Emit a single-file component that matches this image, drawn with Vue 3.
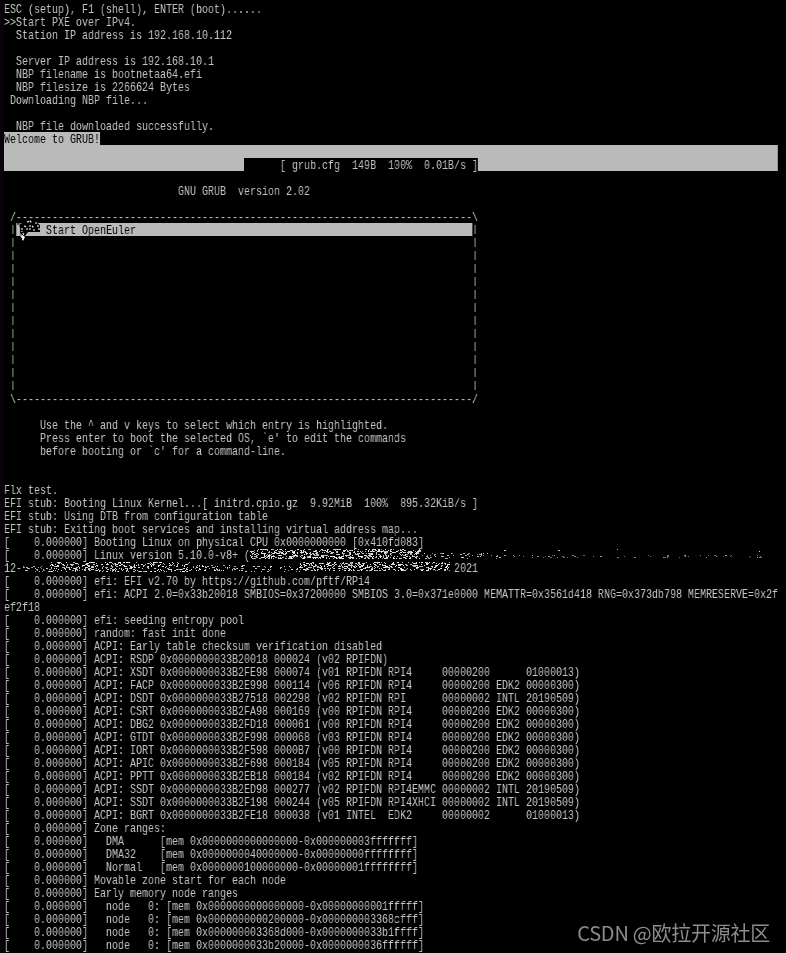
<script setup>
const p = '[    0.000000] '
const acpi = (sig, addr, rest) => `${p}ACPI: ${sig} 0x0000000033B${addr} ${rest}`
const blank = ' '

const seg = (...parts) => parts.map(([t, c]) => ({ t, c: c || '' }))
const plain = (t) => seg([t])
const side = seg([' '], ['|', 'edge'], [' '.repeat(76)], ['|', 'edge'])

const lines = [
  'ESC (setup), F1 (shell), ENTER (boot)......',
  '>>Start PXE over IPv4.',
  '  Station IP address is 192.168.10.112',
  blank,
  '  Server IP address is 192.168.10.1',
  '  NBP filename is bootnetaa64.efi',
  '  NBP filesize is 2266624 Bytes',
  ' Downloading NBP file...',
  blank,
  '  NBP file downloaded successfully.',
].map(plain)

const rows = [
  ...lines,
  seg(['Welcome to GRUB!', 'inv']),
  seg([' '.repeat(129), 'inv']),
  seg([' '.repeat(40), 'inv'], ['      [ grub.cfg  149B  100%  0.01B/s ]'], [' '.repeat(50), 'inv']),
  plain(blank),
  plain(' '.repeat(29) + 'GNU GRUB  version 2.02'),
  plain(blank),
  plain(' /' + '-'.repeat(76) + '\\'),
  seg([' '], ['|', 'edge'], ['     Start OpenEuler' + ' '.repeat(56), 'inv'], ['|', 'edge']),
  ...Array(12).fill(side),
  plain(' \\' + '-'.repeat(76) + '/'),
  plain(blank),
  plain('      Use the ^ and v keys to select which entry is highlighted.'),
  plain("      Press enter to boot the selected OS, `e' to edit the commands"),
  plain("      before booting or `c' for a command-line."),
  plain(blank),
  plain(blank),
  ...[
    'Flx test.',
    'EFI stub: Booting Linux Kernel...[ initrd.cpio.gz  9.92MiB  100%  895.32KiB/s ]',
    'EFI stub: Using DTB from configuration table',
    'EFI stub: Exiting boot services and installing virtual address map...',
    p + 'Booting Linux on physical CPU 0x0000000000 [0x410fd083]',
    p + 'Linux version 5.10.0-v8+ (',
    '12-' + ' '.repeat(72) + '2021',
    p + 'efi: EFI v2.70 by https://github.com/pftf/RPi4',
    p + 'efi: ACPI 2.0=0x33b20018 SMBIOS=0x37200000 SMBIOS 3.0=0x371e0000 MEMATTR=0x3561d418 RNG=0x373db798 MEMRESERVE=0x2f',
    'ef2f18',
    p + 'efi: seeding entropy pool',
    p + 'random: fast init done',
    p + 'ACPI: Early table checksum verification disabled',
    acpi('RSDP', '20018', '000024 (v02 RPIFDN)'),
    acpi('XSDT', '2FE98', '000074 (v01 RPIFDN RPI4     00000200      01000013)'),
    acpi('FACP', '2E998', '000114 (v06 RPIFDN RPI4     00000200 EDK2 00000300)'),
    acpi('DSDT', '27518', '002298 (v02 RPIFDN RPI      00000002 INTL 20190509)'),
    acpi('CSRT', '2FA98', '000169 (v00 RPIFDN RPI4     00000200 EDK2 00000300)'),
    acpi('DBG2', '2FD18', '000061 (v00 RPIFDN RPI4     00000200 EDK2 00000300)'),
    acpi('GTDT', '2F998', '000068 (v03 RPIFDN RPI4     00000200 EDK2 00000300)'),
    acpi('IORT', '2F598', '0000B7 (v00 RPIFDN RPI4     00000200 EDK2 00000300)'),
    acpi('APIC', '2F698', '000184 (v05 RPIFDN RPI4     00000200 EDK2 00000300)'),
    acpi('PPTT', '2EB18', '000184 (v02 RPIFDN RPI4     00000200 EDK2 00000300)'),
    acpi('SSDT', '2ED98', '000277 (v02 RPIFDN RPI4EMMC 00000002 INTL 20190509)'),
    acpi('SSDT', '2F198', '000244 (v05 RPIFDN RPI4XHCI 00000002 INTL 20190509)'),
    acpi('BGRT', '2FE18', '000038 (v01 INTEL  EDK2     00000002      01000013)'),
    p + 'Zone ranges:',
    p + '  DMA      [mem 0x0000000000000000-0x000000003fffffff]',
    p + '  DMA32    [mem 0x0000000040000000-0x00000000ffffffff]',
    p + '  Normal   [mem 0x0000000100000000-0x00000001ffffffff]',
    p + 'Movable zone start for each node',
    p + 'Early memory node ranges',
    p + '  node   0: [mem 0x0000000000000000-0x00000000001fffff]',
    p + '  node   0: [mem 0x0000000000200000-0x000000003368cfff]',
    p + '  node   0: [mem 0x000000003368d000-0x0000000033b1ffff]',
    p + '  node   0: [mem 0x0000000033b20000-0x0000000036ffffff]',
    p + '  node   0: [mem 0x0000000037000000-0x0000000037ffffff]',
  ].map(plain),
]

// Scrubbed part of the kernel version string: seeded speckle
let seed = 73921
const rnd = () => {
  seed = (seed * 16807) % 2147483647
  return seed / 2147483647
}
const dots = []
const scatter = (x0, x1, y0, y1, density, shade) => {
  for (let x = x0; x < x1; x += 1) {
    for (let y = y0; y < y1; y += 1) {
      if (rnd() < density) dots.push({ x, y, w: rnd() < 0.35 ? 2 : 1, o: shade + rnd() * 0.3 })
    }
  }
}
scatter(250, 420, 549, 559, 0.3, 0.65)
scatter(420, 500, 553, 559, 0.12, 0.5)
scatter(500, 772, 555, 558, 0.06, 0.35)
scatter(500, 772, 549, 552, 0.006, 0.7)
scatter(22, 50, 566, 572, 0.14, 0.5)
scatter(50, 190, 562, 572, 0.22, 0.65)
scatter(190, 245, 565, 571, 0.18, 0.6)
scatter(245, 300, 566, 572, 0.1, 0.6)
scatter(300, 450, 562, 571, 0.26, 0.65)
</script>

<template>
  <div class="screen">
    <div class="term">
      <div v-for="(row, i) in rows" :key="i" class="row"><span
        v-for="(s, j) in row" :key="j" :class="s.c">{{ s.t }}</span></div>
    </div>

    <svg class="logo" width="26" height="22" viewBox="0 0 26 22" aria-hidden="true">
      <path d="M4 4 L10 1 L20 2 L24 5 L24 12 L12 12 L9 16 L6 20 L4 12 Z" fill="#000" />
      <path d="M0 2h1M2 1v3M1 4h3M3 6h1" stroke="#111" stroke-width="1" fill="none" />
      <path d="M11 2l3 -1 2 2M19 3h3M22 5v2M23 8v3M8 6l3 1M13 6h3l2 2M10 9h5M17 10h3M6 8v4M7 13l1 3M5 16l2 4"
        stroke="#fff" stroke-width="1.1" fill="none" stroke-dasharray="2 1" />
      <path d="M5 14l2 7 2 -4z" fill="#fff" />
    </svg>

    <svg class="speckle" width="786" height="30" viewBox="0 548 786 30" aria-hidden="true">
      <rect v-for="(d, i) in dots" :key="i" :x="d.x" :y="d.y" :width="d.w" height="1" fill="#fff" :opacity="d.o" />
    </svg>

    <div class="mark">CSDN @欧拉开源社区</div>
  </div>
</template>

<style scoped>
.screen {
  position: relative;
  box-sizing: border-box;
  width: 786px;
  height: 953px;
  padding: 2px 0 0 4px;
  overflow: hidden;
  background: linear-gradient(to right, #0b030b 3px, #000 4px);
  color: #c4c4c4;
}
.term {
  width: 1010px;
  font-family: "Liberation Mono", monospace;
  font-size: 13px;
  line-height: 15px;
  transform: scaleX(0.7691);
  transform-origin: 0 0;
  will-change: transform;
}
.row {
  height: 13px;
  white-space: pre;
}
.inv {
  display: inline-block;
  height: 13px;
  overflow: hidden;
  vertical-align: top;
  background: #bababa;
  color: #000;
}
.edge {
  display: inline-block;
  width: 1ch;
  height: 9px;
  margin-top: 2px;
  overflow: hidden;
  line-height: 11px;
  vertical-align: top;
}
.logo {
  position: absolute;
  left: 16px;
  top: 220px;
}
.speckle {
  position: absolute;
  left: 0;
  top: 548px;
}
.mark {
  position: absolute;
  right: 16px;
  top: 919px;
  font-family: "Noto Sans CJK SC", "Liberation Sans", sans-serif;
  font-size: 20px;
  line-height: 28px;
  letter-spacing: -0.25px;
  color: #8c8c8c;
}
</style>

<style>
html, body { margin: 0; background: #000; }
</style>
